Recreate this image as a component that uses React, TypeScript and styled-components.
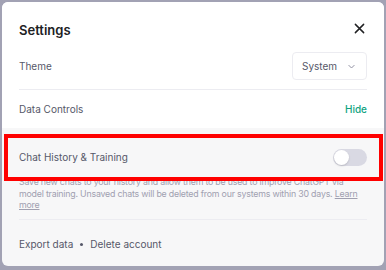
import styled, { createGlobalStyle } from "styled-components"

const GlobalStyle = createGlobalStyle`
    html, body {
        margin: 0;
        padding: 0;
        background: #a2a2b4;
        font-family: Inter, "Noto Sans", Arial, sans-serif;
    }
    #root {
        padding: 2px;
        width: 386px;
        height: 270px;
        box-sizing: border-box;
    }
`

export default function App() {
    return (
        <>
            <GlobalStyle />
            <Card>
                <TopSection>
                    <Header>
                        <Title>Settings</Title>
                        <CloseButton aria-label="Close">
                            <svg width="11" height="11" viewBox="0 0 12 12" fill="none" stroke="#202123" strokeWidth="1.6" strokeLinecap="round">
                                <path d="M1.5 1.5l9 9M10.5 1.5l-9 9" />
                            </svg>
                        </CloseButton>
                    </Header>
                    <Row divider>
                        <Label>Theme</Label>
                        <Select>
                            System
                            <svg width="9" height="9" viewBox="0 0 12 12" fill="none" stroke="#8e8ea0" strokeWidth="1.3" strokeLinecap="round" strokeLinejoin="round">
                                <path d="M2.5 4.5l3.5 3.5 3.5-3.5" />
                            </svg>
                        </Select>
                    </Row>
                    <Row>
                        <Label>Data Controls</Label>
                        <LinkButton>Hide</LinkButton>
                    </Row>
                </TopSection>
                <BottomSection>
                    <Highlight />
                    <ToggleRow>
                        <Label>Chat History &amp; Training</Label>
                        <Toggle>
                            <Knob />
                        </Toggle>
                    </ToggleRow>
                    <Description>
                        Save new chats to your history and allow them to be used to improve ChatGPT via
                        <br />
                        model training. Unsaved chats will be deleted from our systems within 30 days. <a>Learn more</a>
                    </Description>
                    <Footer>
                        <Label>Export data</Label>
                        <Dot />
                        <Label>Delete account</Label>
                    </Footer>
                </BottomSection>
            </Card>
        </>
    )
}

const Card = styled.div`
    width: 382px;
    height: 264px;
    background: #f7f7f8;
    border-radius: 6px;
    overflow: hidden;
    display: flex;
    flex-direction: column;
`

const TopSection = styled.div`
    background: #ffffff;
    padding: 0 17px;
`

const Header = styled.div`
    display: flex;
    justify-content: space-between;
    align-items: center;
    padding-top: 18px;
    height: 20px;
`

const Title = styled.h2`
    margin: 0;
    font-size: 13px;
    font-weight: 600;
    color: #202123;
    line-height: 20px;
`

const CloseButton = styled.button`
    border: none;
    background: none;
    padding: 0;
    margin-right: 2px;
    margin-top: -4px;
    display: flex;
`

const Row = styled.div<{ divider?: boolean }>`
    display: flex;
    justify-content: space-between;
    align-items: center;
    margin-top: ${p => (p.divider ? "12px" : "0")};
    height: ${p => (p.divider ? "28px" : "38px")};
    padding-bottom: ${p => (p.divider ? "9px" : "0")};
    border-bottom: ${p => (p.divider ? "1px solid #ececf1" : "none")};
`

const Label = styled.span`
    font-size: 10px;
    color: #565869;
`

const Select = styled.div`
    display: flex;
    align-items: center;
    justify-content: space-between;
    box-sizing: border-box;
    height: 28px;
    width: 75px;
    padding: 0 10px 0 9px;
    border: 1px solid #ececf1;
    border-radius: 4px;
    font-size: 10px;
    color: #565869;
`

const LinkButton = styled.span`
    font-size: 10px;
    font-weight: 500;
    color: #10a37f;
`

const BottomSection = styled.div`
    position: relative;
    flex: 1;
    padding: 0 17px;
`

const Highlight = styled.div`
    position: absolute;
    left: 2px;
    top: 6px;
    width: 379px;
    height: 47px;
    box-sizing: border-box;
    border: 4px solid #ff0000;
    pointer-events: none;
`

const ToggleRow = styled.div`
    display: flex;
    justify-content: space-between;
    align-items: center;
    padding-top: 19px;
    height: 20px;
`

const Toggle = styled.div`
    width: 34px;
    height: 17px;
    border-radius: 9px;
    background: #d9d9e3;
    display: flex;
    align-items: center;
    padding: 0 1px;
    box-sizing: border-box;
`

const Knob = styled.div`
    width: 15px;
    height: 15px;
    border-radius: 50%;
    background: #ffffff;
    box-shadow: 0 1px 2px rgba(0, 0, 0, 0.15);
`

const Description = styled.p`
    margin: 9px 0 0;
    padding-bottom: 8px;
    border-bottom: 1px solid #ececf1;
    font-size: 8.8px;
    letter-spacing: -0.2px;
    line-height: 11.7px;
    color: #a0a0b0;
    & a {
        color: inherit;
        text-decoration: underline;
    }
`

const Footer = styled.div`
    display: flex;
    align-items: center;
    gap: 7px;
    height: 48px;
`

const Dot = styled.span`
    width: 3px;
    height: 3px;
    border-radius: 50%;
    background: #565869;
`
